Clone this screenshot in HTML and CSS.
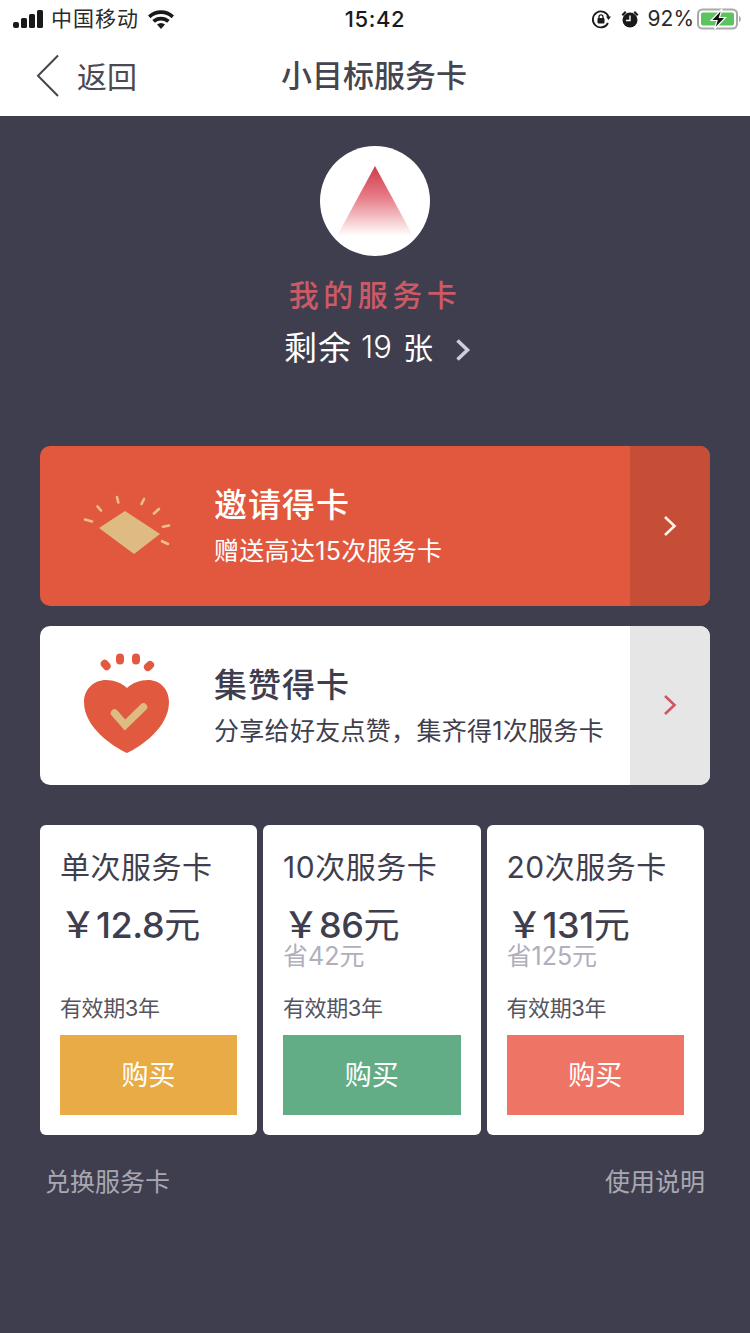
FILE: index.html
```html
<!DOCTYPE html>
<html lang="zh-CN">
<head>
<meta charset="utf-8">
<title>小目标服务卡</title>
<link rel="stylesheet" href="styles.css">
</head>
<body>
<div class="page">
  <header class="top">
    <div class="status">
      <div class="status-side">
        <svg class="signal" width="33" height="18" viewBox="0 0 33 18"><rect x="1" y="12" width="6" height="6" rx="2"/><rect x="9" y="8" width="6" height="10" rx="1.500"/><rect x="17" y="4" width="6" height="14" rx="1.500"/><rect x="25" y="0" width="6" height="18" rx="1.500"/></svg>
        <span class="carrier">中国移动</span>
        <svg class="wifi" width="28" height="20" viewBox="0 0 28 20"><path d="M1 6.500a19 19 0 0 1 26 0l-2.500 2.700a15.500 15.500 0 0 0-21 0z"/><path d="M5.300 11a13 13 0 0 1 17.400 0l-2.600 2.700a9.300 9.300 0 0 0-12.200 0z"/><path d="M10 15.500a6 6 0 0 1 8 0L14 20z"/></svg>
      </div>
      <div class="time">15:42</div>
      <div class="status-side status-right">
        <svg width="20" height="20" viewBox="0 0 20 20"><path d="M17.500 8A8 8 0 1 0 17 14" fill="none" stroke="#1a1a1a" stroke-width="1.800"/><path d="M15 7.500h5L17.500 11z" fill="#1a1a1a"/><rect x="6.500" y="9" width="7" height="5.500" rx="1" fill="#1a1a1a"/><path d="M8 9.500V7.800a2 2 0 0 1 4 0v1.700" fill="none" stroke="#1a1a1a" stroke-width="1.300"/></svg>
        <svg class="alarm" width="20" height="20" viewBox="0 0 20 20"><circle cx="10" cy="11" r="7.500" fill="#1a1a1a"/><path d="M10 6.500V11.500H6" fill="none" stroke="#fff" stroke-width="1.400"/><path d="M1.500 5.500 5 2 6.500 3.500 3 7zM18.500 5.500 15 2 13.500 3.500 17 7z" fill="#1a1a1a"/></svg>
        <span class="battery-text">92%</span>
        <svg width="44" height="22" viewBox="0 0 44 22"><rect x="1" y="1.500" width="39" height="19" rx="4.500" fill="none" stroke="#a9a9a9" stroke-width="2"/><rect x="4" y="4.500" width="33" height="13" rx="2" fill="#5cc45c"/><path d="M42 8v6c1.200-.4 1.800-1.500 1.800-3S43.200 8.400 42 8z" fill="#a9a9a9"/><path d="M25 1 14 12.500H20L17.500 21 28.500 9.500H22.500z" fill="#111" stroke="#fff" stroke-width="1.200"/></svg>
      </div>
    </div>
    <nav class="nav">
      <div class="back">
        <svg width="24" height="44" viewBox="0 0 24 44"><path d="M22 1.500 2 21.800 22 42" fill="none" stroke="#45454f" stroke-width="2"/></svg>
        <span class="back-label">返回</span>
      </div>
      <h1 class="nav-title">小目标服务卡</h1>
    </nav>
  </header>

  <main class="main">
    <section class="summary">
      <div class="logo">
        <svg width="76" height="70" viewBox="0 0 76 70">
          <defs><linearGradient id="tri" x1="0" y1="0" x2="0" y2="1"><stop offset="0" stop-color="#cf3a4c"/><stop offset=".45" stop-color="#e77d88"/><stop offset="1" stop-color="#ffffff"/></linearGradient></defs>
          <path d="M38 0 76 70H0z" fill="url(#tri)"/>
        </svg>
      </div>
      <div class="summary-title">我的服务卡</div>
      <div class="summary-count">
        <span class="count-zh">剩余</span><span class="count-num">19</span><span class="count-unit">张</span>
        <svg class="count-arrow" width="16" height="24" viewBox="0 0 16 24"><path d="M2.500 2.500 12.500 12 2.500 21.500" fill="none" stroke="#cfcdd9" stroke-width="3.600"/></svg>
      </div>
    </section>

    <section class="promos">
      <div class="promo promo-red">
        <div class="promo-icon">
          <svg width="92" height="70" viewBox="0 0 92 70">
            <path d="M19 38 45 21 80 44 54 64z" fill="#dfbb84"/>
            <g stroke="#eec07f" stroke-width="2.600" stroke-linecap="round" fill="none">
              <path d="M5 29.500l7 2"/><path d="M17.500 16.500l3.500 4"/><path d="M37 7l1.300 5.500"/><path d="M64 9l-2.500 5"/><path d="M79 19l-5 4.500"/><path d="M89 35.500l-6 1.300"/><path d="M88 54l-6-2.800"/>
            </g>
          </svg>
        </div>
        <div class="promo-body">
          <div class="promo-title">邀请得卡</div>
          <div class="promo-sub">赠送高达15次服务卡</div>
        </div>
        <div class="promo-go">
          <svg width="14" height="22" viewBox="0 0 14 22"><path d="M2 2 11.500 11 2 20" fill="none" stroke="#fff2e8" stroke-width="2.600"/></svg>
        </div>
      </div>
      <div class="promo promo-white">
        <div class="promo-icon">
          <svg width="92" height="110" viewBox="0 0 92 110">
            <path d="M47 103C34 97 4 78 4 52 4 39 14 30 26 30 34 30 42 33 47 38 52 33 60 30 68 30 80 30 89 39 89 52 89 78 60 97 47 103z" fill="#e15a40"/>
            <path d="M34.500 63 45 75 63.500 57" fill="none" stroke="#dfbb84" stroke-width="7.500" stroke-linecap="round"/>
            <g fill="#e15a40"><rect x="21.700" y="9.500" width="8" height="11" rx="4" transform="rotate(-40 25.700 15)"/><rect x="36" y="3.500" width="8" height="11" rx="4"/><rect x="52" y="3.500" width="8" height="11" rx="4"/><rect x="65" y="10.500" width="8" height="11" rx="4" transform="rotate(48 69 16)"/></g>
          </svg>
        </div>
        <div class="promo-body">
          <div class="promo-title">集赞得卡</div>
          <div class="promo-sub">分享给好友点赞，集齐得1次服务卡</div>
        </div>
        <div class="promo-go">
          <svg width="14" height="22" viewBox="0 0 14 22"><path d="M2 2 11.500 11 2 20" fill="none" stroke="#d2565f" stroke-width="2.600"/></svg>
        </div>
      </div>
    </section>

    <section class="prices">
      <div class="price">
        <div class="price-name">单次服务卡</div>
        <div class="price-amount"><span class="yen">￥</span>12.8<span class="yuan">元</span></div>
        <div class="price-save"></div>
        <div class="price-term">有效期3年</div>
        <div class="buy buy-yellow">购买</div>
      </div>
      <div class="price">
        <div class="price-name">10次服务卡</div>
        <div class="price-amount"><span class="yen">￥</span>86<span class="yuan">元</span></div>
        <div class="price-save">省42元</div>
        <div class="price-term">有效期3年</div>
        <div class="buy buy-green">购买</div>
      </div>
      <div class="price">
        <div class="price-name">20次服务卡</div>
        <div class="price-amount"><span class="yen">￥</span>131<span class="yuan">元</span></div>
        <div class="price-save">省125元</div>
        <div class="price-term">有效期3年</div>
        <div class="buy buy-red">购买</div>
      </div>
    </section>

    <footer class="links">
      <span>兑换服务卡</span>
      <span>使用说明</span>
    </footer>
  </main>
</div>
</body>
</html>
```
FILE: styles.css
```css
* { box-sizing: border-box; margin: 0; padding: 0; }
html, body { width: 750px; height: 1333px; overflow: hidden; }
body { font-family: "Inter", "Noto Sans CJK SC", sans-serif; background: #3f3e4e; color: #3f3e4e; }
.page { width: 750px; height: 1333px; display: flex; flex-direction: column; }

.top { background: #fff; height: 116px; flex: none; }
.status { height: 40px; padding: 0 9px 2px 12px; display: grid; grid-template-columns: 1fr auto 1fr; align-items: center; color: #1a1a1a; }
.status-side { display: flex; align-items: center; }
.signal { fill: #1a1a1a; margin-right: 6px; }
.carrier { font-size: 21px; line-height: 26px; margin-right: 8px; letter-spacing: 1px; color: #2a2a2a; }
.wifi { fill: #1a1a1a; }
.time { font-size: 22px; font-weight: 500; line-height: 26px; letter-spacing: .6px; margin-right: 3px; }
.status-right { justify-content: flex-end; gap: 0; }
.alarm { margin-left: 9px; margin-right: 8px; }
.battery-text { font-size: 21px; line-height: 26px; margin-right: 3px; color: #2a2a2a; }

.nav { height: 76px; position: relative; display: flex; align-items: center; justify-content: center; padding-bottom: 4px; padding-right: 2px; }
.back { position: absolute; left: 36px; top: 14px; display: flex; align-items: center; gap: 17px; font-size: 30px; color: #4a4a55; height: 44px; }
.back-label { margin-bottom: 2px; }
.nav-title { font-size: 31px; font-weight: 500; color: #45454f; line-height: 44px; letter-spacing: 0; }

.main { flex: 1; padding: 30px 40px 0; display: flex; flex-direction: column; }

.summary { display: flex; flex-direction: column; align-items: center; height: 300px; flex: none; }
.logo { width: 110px; height: 110px; border-radius: 50%; background: #fff; display: flex; justify-content: center; padding-top: 20px; }
.summary-title { margin-top: 19px; font-size: 30px; line-height: 40px; font-weight: 500; letter-spacing: 4.500px; color: #cc5a66; }
.summary-count { margin-top: 10px; display: flex; align-items: center; color: #fff; height: 42px; padding-left: 5px; }
.count-zh { font-size: 33px; letter-spacing: 1px; }
.count-num { font-size: 31px; margin-left: 9px; font-weight: 350; }
.count-unit { font-size: 30px; margin-left: 11px; }
.count-arrow { margin-left: 22px; margin-top: 8px; }

.promos { display: flex; flex-direction: column; gap: 20px; }
.promo { height: 159.500px; border-radius: 10px; overflow: hidden; display: flex; align-items: center; }
.promo-red { background: #e1583e; color: #fff; }
.promo-white { background: #fff; color: #3f3e4e; }
.promo-icon { width: 174px; flex: none; display: flex; padding-left: 40px; }
.promo-red .promo-icon { margin-bottom: 2px; }
.promo-title { font-size: 33px; line-height: 44px; font-weight: 500; letter-spacing: 1px; margin-top: -1px; }
.promo-body { flex: 1; min-width: 0; padding-top: 2px; }
.promo-sub { font-size: 25px; line-height: 36px; margin-top: 6px; letter-spacing: .3px; white-space: nowrap; }
.promo-go { width: 80px; height: 160px; flex: none; display: flex; align-items: center; justify-content: center; }
.promo-red .promo-go { background: #c64e37; }
.promo-white .promo-go { background: #e6e6e6; }

.prices { margin-top: 40px; display: grid; grid-template-columns: 217px 217.500px 217.500px; gap: 6px; }
.price { height: 310px; border-radius: 6px; background: #fff; padding: 20px; display: flex; flex-direction: column; }
.price-name { font-size: 30px; line-height: 44px; letter-spacing: 0.500px; font-weight: 400; white-space: nowrap; }
.price-amount { font-size: 36px; line-height: 36px; margin-top: 18px; white-space: nowrap; font-weight: 500; letter-spacing: -.4px; }
.yen { font-size: 36px; font-weight: 500; letter-spacing: 0; }
.yuan { font-weight: 400; letter-spacing: 0; }
.price-save { font-size: 25px; line-height: 26px; height: 26px; color: #b0afbb; }
.price-term { font-size: 22px; line-height: 30px; margin-top: 24px; color: #55545f; letter-spacing: -.4px; }
.buy { margin-top: auto; height: 80px; flex: none; padding-bottom: 4px; display: flex; align-items: center; justify-content: center; color: #fff; font-size: 27px; }
.buy-yellow { background: #e9ab45; }
.buy-green { background: #63ad86; }
.buy-red { background: #ee7565; }

.links { margin-top: 30px; padding: 0 5px; display: flex; justify-content: space-between; color: #a9a8b2; font-size: 25px; line-height: 34px; width: 670px; }
```
